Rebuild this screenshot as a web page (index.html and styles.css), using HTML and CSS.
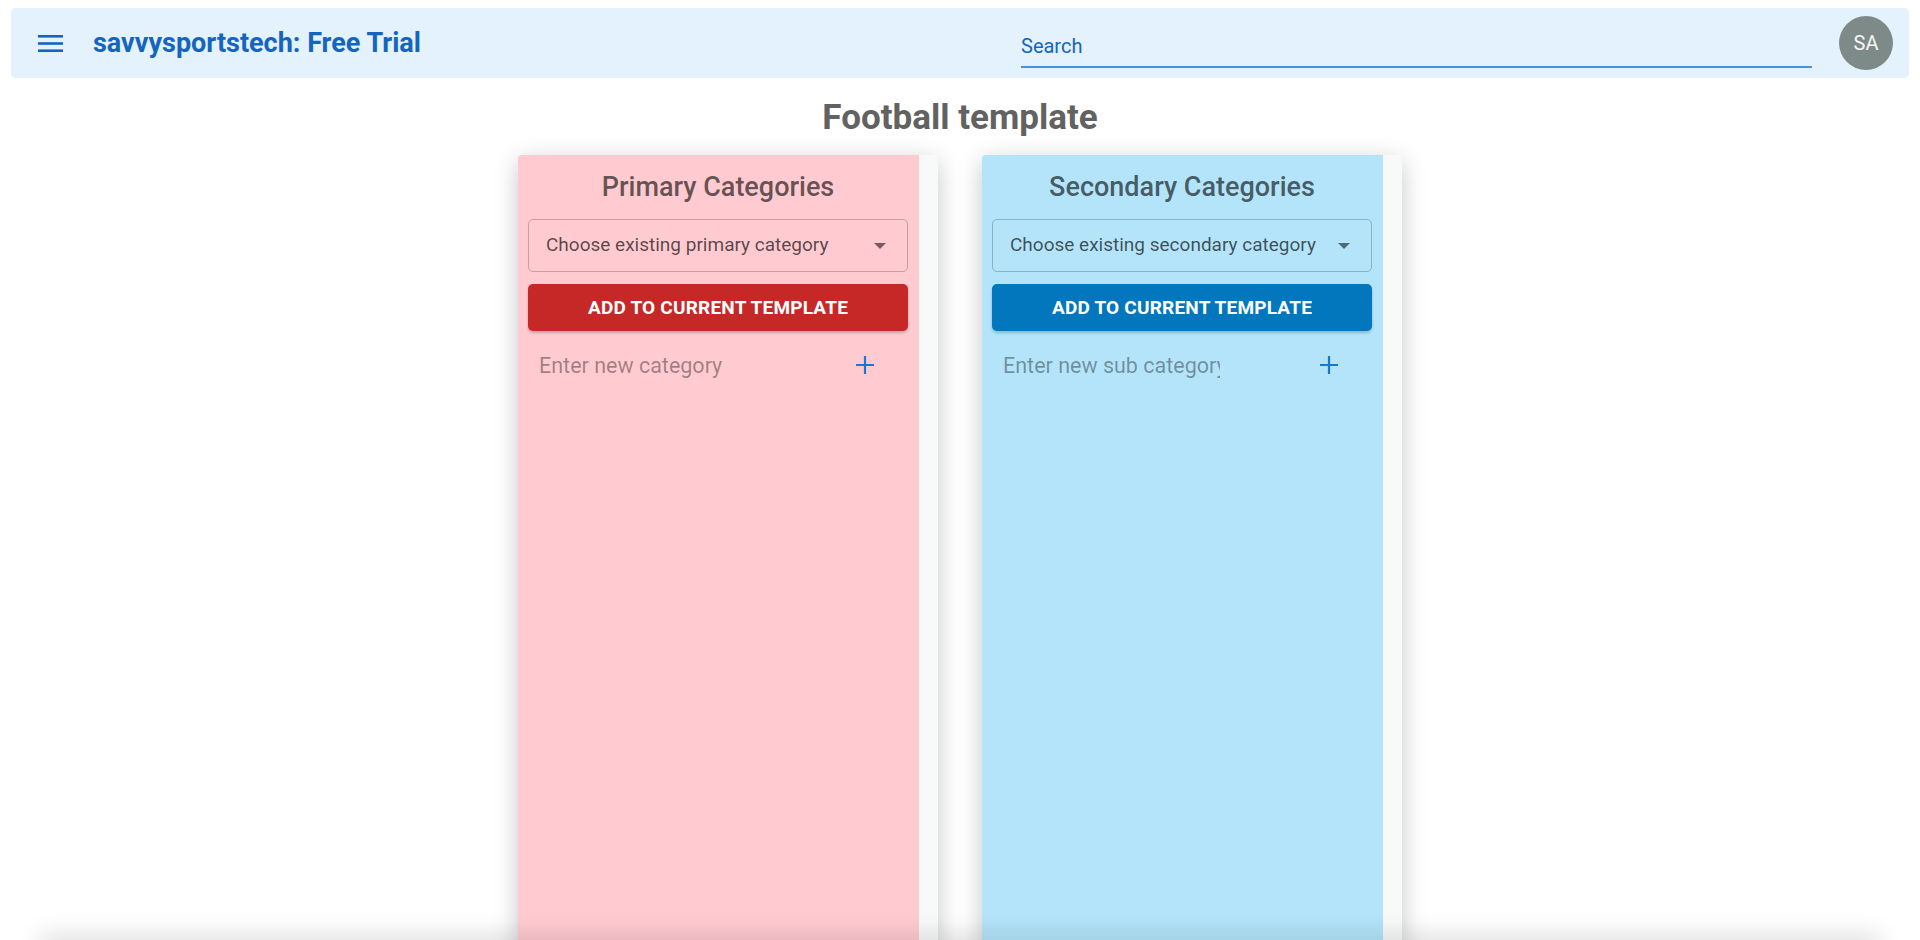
FILE: index.html
```html
<!DOCTYPE html>
<html lang="en">
<head>
<meta charset="utf-8">
<title>Football template</title>
<link rel="stylesheet" href="styles.css">
</head>
<body>
<header class="appbar">
  <div class="brand">
    <svg class="menu-icon" width="25" height="17" viewBox="0 0 25 17" aria-hidden="true">
      <rect x="0" y="0" width="25" height="2.6" fill="#1565c0"/>
      <rect x="0" y="7.2" width="25" height="2.6" fill="#1565c0"/>
      <rect x="0" y="14.4" width="25" height="2.6" fill="#1565c0"/>
    </svg>
    <span class="brand-title">savvysportstech: Free Trial</span>
  </div>
  <div class="search"><span class="search-label">Search</span></div>
  <div class="avatar">SA</div>
</header>

<main class="page">
  <h1 class="page-title">Football template</h1>
  <div class="columns">
    <section class="card">
      <div class="card-body pink">
        <h2 class="card-title">Primary Categories</h2>
        <div class="select">
          <span>Choose existing primary category</span>
          <svg class="caret" width="12" height="6" viewBox="0 0 12 6"><path d="M0 0 L12 0 L6 6 Z" fill="rgba(0,0,0,0.54)"/></svg>
        </div>
        <button class="btn red">ADD TO CURRENT TEMPLATE</button>
        <div class="new-row">
          <span class="placeholder">Enter new category</span>
          <svg class="plus" width="20" height="20" viewBox="0 0 20 20"><path d="M10 1 V19 M1 10 H19" stroke="#1976d2" stroke-width="2.2"/></svg>
        </div>
      </div>
      <div class="scroll-track"></div>
    </section>
    <section class="card">
      <div class="card-body blue">
        <h2 class="card-title">Secondary Categories</h2>
        <div class="select">
          <span>Choose existing secondary category</span>
          <svg class="caret" width="12" height="6" viewBox="0 0 12 6"><path d="M0 0 L12 0 L6 6 Z" fill="rgba(0,0,0,0.54)"/></svg>
        </div>
        <button class="btn blue-btn">ADD TO CURRENT TEMPLATE</button>
        <div class="new-row">
          <span class="placeholder">Enter new sub category</span>
          <svg class="plus" width="20" height="20" viewBox="0 0 20 20"><path d="M10 1 V19 M1 10 H19" stroke="#1976d2" stroke-width="2.2"/></svg>
        </div>
      </div>
      <div class="scroll-track"></div>
    </section>
  </div>
</main>
<div class="bottom-shadow"></div>
</body>
</html>
```

FILE: styles.css
```css
html, body {
  margin: 0;
  padding: 0;
  height: 100%;
  overflow: hidden;
  background: #ffffff;
  font-family: Roboto, "Noto Sans", "Liberation Sans", sans-serif;
}

.appbar {
  margin: 8px 11px 0;
  height: 70px;
  background: #e3f2fd;
  border-radius: 5px;
  display: flex;
  align-items: center;
  padding: 0 16px 0 27px;
}

.brand {
  width: 983px;
  display: flex;
  align-items: center;
  flex: none;
}

.menu-icon {
  flex: none;
  margin-right: 30px;
}

.brand-title {
  color: #1565c0;
  font-size: 27px;
  font-weight: 700;
}

.search {
  flex: 1;
  align-self: flex-end;
  margin-bottom: 10px;
  border-bottom: 2px solid #4a90e2;
  padding-bottom: 6px;
  line-height: 24px;
}

.search-label {
  color: #1565c0;
  font-size: 20px;
}

.avatar {
  flex: none;
  margin-left: 27px;
  width: 54px;
  height: 54px;
  border-radius: 50%;
  background: #7e8a88;
  color: #f4f6f6;
  font-size: 20px;
  display: flex;
  align-items: center;
  justify-content: center;
}

.page {
  display: flex;
  flex-direction: column;
  align-items: center;
}

.page-title {
  margin: 20px 0 17px;
  font-size: 35px;
  line-height: 40px;
  font-weight: 700;
  color: #626262;
}

.columns {
  display: flex;
  gap: 44px;
}

.card {
  width: 420px;
  height: 900px;
  display: flex;
  box-shadow: 0 6px 24px rgba(0, 0, 0, 0.22);
  border-radius: 4px 4px 0 0;
  overflow: hidden;
}

.card-body {
  width: 401px;
  box-sizing: border-box;
  padding: 16px 11px 0 10px;
  display: flex;
  flex-direction: column;
}

.pink { background: #ffcbd1; }
.blue { background: #b3e4fa; }

.scroll-track {
  flex: 1;
  background: #f8fafa;
}

.card-title {
  margin: 1px 0 17px;
  text-align: center;
  font-size: 27px;
  line-height: 30px;
  font-weight: 500;
  color: rgba(0, 0, 0, 0.62);
}

.select {
  height: 53px;
  box-sizing: border-box;
  border: 1px solid rgba(0, 0, 0, 0.22);
  border-radius: 5px;
  display: flex;
  align-items: center;
  justify-content: space-between;
  padding: 0 21px 0 17px;
  font-size: 19px;
  color: rgba(0, 0, 0, 0.66);
}

.select span {
  position: relative;
  top: -1px;
}

.caret { flex: none; }

.btn {
  margin-top: 12px;
  height: 47px;
  border: none;
  border-radius: 5px;
  color: #ffffff;
  font-family: Roboto, "Noto Sans", "Liberation Sans", sans-serif;
  font-size: 19px;
  font-weight: 700;
  letter-spacing: 0.2px;
  box-shadow: 0 2px 3px rgba(0, 0, 0, 0.2);
}

.red { background: #c62828; }
.blue-btn { background: #0277bd; }

.new-row {
  margin-top: 14px;
  height: 40px;
  display: flex;
  align-items: center;
  justify-content: space-between;
  padding: 0 33px 0 11px;
}

.placeholder {
  width: 217px;
  overflow: hidden;
  white-space: nowrap;
  font-size: 21.5px;
  color: rgba(0, 0, 0, 0.38);
}

.plus { flex: none; }

.bottom-shadow {
  position: fixed;
  left: 40px;
  right: 40px;
  bottom: -30px;
  height: 30px;
  box-shadow: 0 -6px 24px rgba(0, 0, 0, 0.12);
  background: #ffffff;
}
```
